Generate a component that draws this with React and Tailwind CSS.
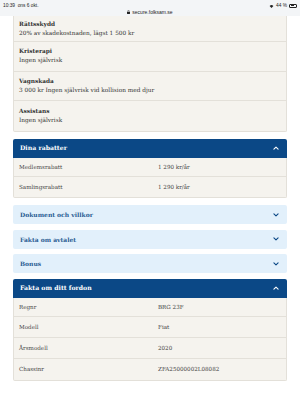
import React from "react";

const font = { fontFamily: '"DejaVu Serif", "Liberation Serif", serif' };

const Chevron = ({ up, className }) => (
  <svg viewBox="0 0 10 6" className={className} fill="none" stroke="currentColor" strokeWidth="1.8" strokeLinecap="round" strokeLinejoin="round">
    {up ? <path d="M1.5 5 L5 1.5 L8.5 5" /> : <path d="M1.5 1 L5 4.5 L8.5 1" />}
  </svg>
);

const coverRows = [
  ["Rättsskydd", "20% av skadekostnaden, lägst 1 500 kr"],
  ["Kristerapi", "Ingen självrisk"],
  ["Vagnskada", "3 000 kr Ingen självrisk vid kollision med djur"],
  ["Assistans", "Ingen självrisk"],
];

const discounts = [
  ["Medlemsrabatt", "1 290 kr/år"],
  ["Samlingsrabatt", "1 290 kr/år"],
];

const vehicle = [
  ["Regnr", "BRG 23F"],
  ["Modell", "Fiat"],
  ["Årsmodell", "2020"],
  ["Chassinr", "ZFA25000002L08082"],
];

const OpenHeader = ({ title }) => (
  <div className="flex h-[19px] items-center justify-between rounded-t-[2px] bg-[#0b4886] pl-[7px] pr-[8px] text-[6.2px] font-bold text-white">
    <span>{title}</span>
    <Chevron up className="h-[4px] w-[6px]" />
  </div>
);

const ClosedPanel = ({ title }) => (
  <div className="mb-[5.5px] flex h-[19px] items-center justify-between rounded-[2px] bg-[#e2f0fb] pl-[7px] pr-[8px] text-[6px] font-bold text-[#2a5d93]">
    <span>{title}</span>
    <Chevron className="h-[4px] w-[6px] text-[#0b4886]" />
  </div>
);

const TableRows = ({ rows, heights }) => (
  <div className="rounded-b-[2px] border border-t-0 border-[#e3e0d9] bg-[#f5f3ee] text-[5.6px] text-[#444]">
    {rows.map(([k, v], i) => (
      <div
        key={k}
        className={`flex items-center px-[5px] ${heights[i]} ${i < rows.length - 1 ? "border-b border-[#e3e0d9]" : ""}`}
      >
        <span className="w-[139px]">{k}</span>
        <span>{v}</span>
      </div>
    ))}
  </div>
);

export default function App() {
  return (
    <div className="h-[400px] w-[300px] overflow-hidden bg-white" style={font}>
      <div className="relative h-[16px] bg-[#f3f5f7] text-[4.8px] text-[#222]" style={{ fontFamily: '"Liberation Sans", Arial, sans-serif' }}>
        <span className="absolute left-[3px] top-[2px]">10:39 &nbsp;ons 6 okt.</span>
        <div className="absolute left-0 right-0 top-[8.5px] flex items-center justify-center gap-[2px] text-[5px]">
          <svg viewBox="0 0 4 5" className="h-[4px] w-[3px]" fill="#222">
            <rect x="0" y="2" width="4" height="3" rx="0.4" />
            <path d="M1 2 V1.2 A1 1 0 0 1 3 1.2 V2" stroke="#222" strokeWidth="0.6" fill="none" />
          </svg>
          <span>secure.folksam.se</span>
        </div>
        <div className="absolute right-[3px] top-[2px] flex items-center gap-[2px]">
          <svg viewBox="0 0 8 6" className="h-[4px] w-[5px]" fill="#222">
            <path d="M4 6 L1 3 A4.2 4.2 0 0 1 7 3 Z" />
          </svg>
          <span>44 %</span>
          <div className="flex h-[4px] w-[8px] items-center rounded-[1px] border-[0.5px] border-[#222] p-[0.5px]">
            <div className="h-full w-[3px] bg-[#222]" />
          </div>
        </div>
      </div>

      <div className="mx-[13px]">
        <div className="rounded-b-[2px] border border-t-0 border-[#e3e0d9] bg-[#f5f3ee] text-[5.8px] text-[#333]">
          {coverRows.map(([k, v], i) => (
            <div
              key={k}
              className={`flex flex-col justify-center px-[5px] ${i === 0 ? "h-[26px] pt-[1px]" : "h-[29.5px]"} ${i < coverRows.length - 1 ? "border-b border-[#e3e0d9]" : ""}`}
            >
              <span className="font-bold leading-[9px]">{k}</span>
              <span className="leading-[9px]">{v}</span>
            </div>
          ))}
        </div>

        <div className="mt-[7px]">
          <OpenHeader title="Dina rabatter" />
          <TableRows rows={discounts} heights={["h-[19.5px]", "h-[20px]"]} />
        </div>

        <div className="mt-[7px]">
          <ClosedPanel title="Dokument och villkor" />
          <ClosedPanel title="Fakta om avtalet" />
          <ClosedPanel title="Bonus" />
        </div>

        <div>
          <OpenHeader title="Fakta om ditt fordon" />
          <TableRows rows={vehicle} heights={["h-[19.5px]", "h-[21px]", "h-[21px]", "h-[21px]"]} />
        </div>
      </div>
    </div>
  );
}
